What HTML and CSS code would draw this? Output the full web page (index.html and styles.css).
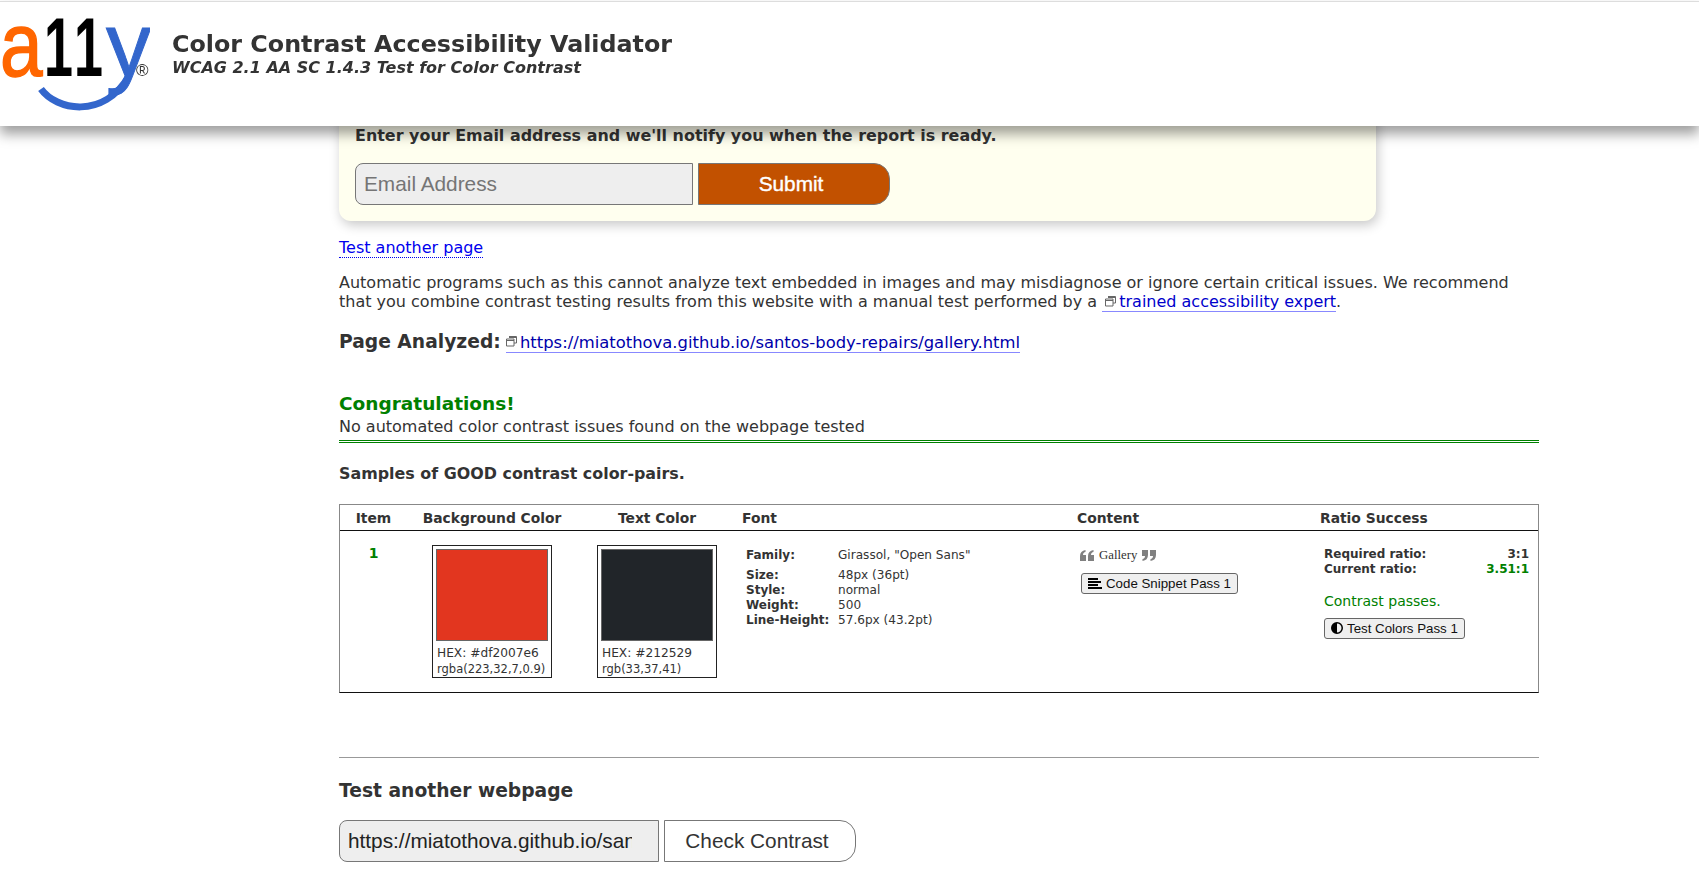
FILE: index.html
```html
<!DOCTYPE html>
<html lang="en">
<head>
<meta charset="utf-8">
<title>Color Contrast Accessibility Validator</title>
<link rel="stylesheet" href="styles.css">
</head>
<body>
<header class="site-header">
  <svg class="logo" width="150" height="120" viewBox="0 0 150 120" aria-label="a11y logo">
    <text class="logo-a" transform="translate(0 74) scale(.85 1)">a</text>
    <text class="logo-1" transform="translate(44 74) scale(.62 1)">1</text>
    <text class="logo-1" transform="translate(74 74) scale(.62 1)">1</text>
    <text class="logo-y" x="106" y="74">y</text>
    <path class="logo-swoosh" d="M41 87 C56 108 103 118 129 74" />
    <text class="logo-r" x="136" y="74">®</text>
  </svg>
  <div class="titles">
    <h1>Color Contrast Accessibility Validator</h1>
    <p class="subtitle">WCAG 2.1 AA SC 1.4.3 Test for Color Contrast</p>
  </div>
</header>

<main class="content">
  <section class="notify">
    <p class="notify-text">Enter your Email address and we'll notify you when the report is ready.</p>
    <form class="notify-form">
      <input class="email" type="text" placeholder="Email Address">
      <button class="submit" type="button">Submit</button>
    </form>
  </section>

  <p class="another"><a href="#">Test another page</a></p>

  <p class="disclaimer">Automatic programs such as this cannot analyze text embedded in images and may misdiagnose or ignore certain critical issues. We recommend that you combine contrast testing results from this website with a manual test performed by a <a href="#" class="ext"><svg class="ext-icon" width="11" height="11" viewBox="0 0 11 11"><path d="M3 .5h7.5v6.5H8M.5 3h7.5v7H.5zM.5 4.500h7.500M3 1.500h7.500"/></svg>trained accessibility expert</a>.</p>

  <p class="analyzed"><strong>Page Analyzed:</strong> <a href="#" class="ext url"><svg class="ext-icon" width="11" height="11" viewBox="0 0 11 11"><path d="M3 .5h7.5v6.5H8M.5 3h7.5v7H.5zM.5 4.500h7.500M3 1.500h7.500"/></svg>https://miatothova.github.io/santos-body-repairs/gallery.html</a></p>

  <h2 class="congrats">Congratulations!</h2>
  <p class="none-found">No automated color contrast issues found on the webpage tested</p>

  <h3 class="samples">Samples of GOOD contrast color-pairs.</h3>

  <table class="results">
    <thead>
      <tr>
        <th class="c-item">Item</th>
        <th class="c-bg">Background Color</th>
        <th class="c-text">Text Color</th>
        <th class="c-font left">Font</th>
        <th class="c-content left">Content</th>
        <th class="c-ratio left">Ratio Success</th>
      </tr>
    </thead>
    <tbody>
      <tr>
        <td class="item-num">1</td>
        <td>
          <div class="swatch">
            <div class="chip chip-red"></div>
            <div class="hex">HEX: #df2007e6</div>
            <div class="rgb">rgba(223,32,7,0.9)</div>
          </div>
        </td>
        <td>
          <div class="swatch">
            <div class="chip chip-dark"></div>
            <div class="hex">HEX: #212529</div>
            <div class="rgb">rgb(33,37,41)</div>
          </div>
        </td>
        <td>
          <dl class="font-info">
            <dt class="first">Family:</dt><dd class="first">Girassol, "Open Sans"</dd>
            <dt>Size:</dt><dd>48px (36pt)</dd>
            <dt>Style:</dt><dd>normal</dd>
            <dt>Weight:</dt><dd>500</dd>
            <dt>Line-Height:</dt><dd>57.6px (43.2pt)</dd>
          </dl>
        </td>
        <td>
          <div class="snippet">
            <svg class="quote" width="14" height="11" viewBox="0 0 14 11"><path d="M0 11V6C0 2.500 2 .5 5.500 0v2C4 2.300 3 3.300 3 5h3v6zM8 11V6c0-3.500 2-5.500 5.500-6v2C12 2.300 11 3.300 11 5h3v6z"/></svg>
            <span class="snippet-text">Gallery</span>
            <svg class="quote" width="14" height="11" viewBox="0 0 14 11"><path d="M6 0v5c0 3.500-2 5.500-5.500 6V9C2 8.700 3 7.700 3 6H0V0zM14 0v5c0 3.500-2 5.500-5.500 6V9C10 8.700 11 7.700 11 6H8V0z"/></svg>
          </div>
          <button class="mini" type="button"><svg width="14" height="11" viewBox="0 0 14 11"><path d="M0 0h10v2H0zM0 3h13v2H0zM0 6h10v2H0zM0 9h14v2H0z"/></svg>Code Snippet Pass 1</button>
        </td>
        <td class="ratio-cell">
          <div class="ratio-row"><b>Required ratio:</b><b>3:1</b></div>
          <div class="ratio-row"><b>Current ratio:</b><b class="good">3.51:1</b></div>
          <p class="passes">Contrast passes.</p>
          <button class="mini" type="button"><svg width="12" height="12" viewBox="0 0 12 12"><path d="M6 0a6 6 0 1 0 0 12A6 6 0 0 0 6 0zm0 1.500a4.500 4.500 0 0 1 0 9z" fill-rule="evenodd"/></svg>Test Colors Pass 1</button>
        </td>
      </tr>
    </tbody>
  </table>

  <hr class="rule">

  <h2 class="test-again">Test another webpage</h2>
  <form class="test-form">
    <input class="url-input" type="text" value="https://miatothova.github.io/santos-body-repairs/gallery.html">
    <button class="check" type="button">Check Contrast</button>
  </form>
</main>
</body>
</html>
```

FILE: styles.css
```css
html, body { margin: 0; padding: 0; }
body {
  background: #fff;
  color: #333;
  font-family: "DejaVu Sans", Verdana, sans-serif;
  font-size: 16px;
  line-height: 19.5px;
  height: 881px;
  overflow: hidden;
}

/* Fixed header: overlaps the scrolled content */
.site-header {
  position: fixed;
  top: 0;
  left: 0;
  right: 0;
  height: 124px;
  background: #fff;
  border-top: 1px solid #ddd;
  margin-top: 1px;
  box-shadow: 0 8px 12px rgba(0, 0, 0, .38);
  display: flex;
  align-items: flex-start;
  z-index: 10;
}
.logo { flex: none; margin-right: 22px; }
.logo text { font-family: "Liberation Sans", Arial, sans-serif; }
.logo-a { font-size: 90px; fill: #f60; stroke: #f60; stroke-width: 1.500; }
.logo-1 { font-size: 84px; fill: #000; font-weight: 700; }
.logo-y { font-size: 90px; fill: #36c; stroke: #36c; stroke-width: 1; }
.logo-r { font-size: 17px; fill: #333; }
.logo-swoosh { fill: none; stroke: #36c; stroke-width: 7; }
.titles { padding-top: 28px; }
h1 { margin: 0; font-size: 23.800px; line-height: 28px; font-weight: 700; color: #333; }
.subtitle { margin: 0; font-size: 16px; line-height: 19px; font-weight: 700; font-style: italic; }

.content { width: 1200px; margin-left: 339px; }

.notify {
  width: 1037px;
  height: 151px;
  margin-top: 70px;
  padding: 0 16px;
  box-sizing: border-box;
  background: #ffffef;
  border-radius: 0 0 12px 12px;
  box-shadow: 2px 4px 12px rgba(0, 0, 0, .22);
}
.notify-text { margin: 0; padding-top: 56px; font-size: 15.950px; font-weight: 700; line-height: 20px; }
.notify-form { display: flex; gap: 5px; margin-top: 17px; }
.email, .url-input {
  box-sizing: border-box;
  height: 42px;
  border: 1px solid #777;
  border-radius: 8px 0 0 8px;
  background: #eee;
  padding: 0 8px;
  font-family: "Liberation Sans", Arial, sans-serif;
  font-size: 20.800px;
  color: #222;
}
.email { width: 338px; }
.email::placeholder { color: #757575; opacity: 1; }
.submit, .check {
  box-sizing: border-box;
  height: 42px;
  border: 1px solid #777;
  border-radius: 0 16px 16px 0;
  font-family: "Liberation Sans", Arial, sans-serif;
  font-size: 20.800px;
  padding: 0 6px 0 0;
}
.submit {
  width: 192px;
  background: #c25100;
  color: #fff;
  -webkit-text-stroke: .4px #fff;
}

a { color: #00e; text-decoration: none; border-bottom: 1px dotted #00e; }
.another { margin: 17px 0 0; }
.disclaimer { margin: 15px 0 0; }
.ext { border-bottom: 1px solid #88f; color: #00c; }
.ext-icon { margin: 0 3px 3px 0; vertical-align: middle; fill: none; stroke: #666; stroke-width: 1; }
.disclaimer .ext-icon { margin-left: 3px; }
.analyzed { margin: 20px 0 0; font-size: 16.400px; }
.analyzed strong { font-size: 18.700px; }
.url { color: #00a; }

.congrats { margin: 40px 0 0; font-size: 18.500px; line-height: 24px; color: #008000; font-weight: 700; }
.none-found { margin: 1px 0 0; padding-bottom: 3px; border-bottom: 3px double #008000; }
.samples { margin: 21px 0 0; font-size: 15.900px; line-height: 20px; font-weight: 700; }

.results {
  width: 1200px;
  margin-top: 20px;
  table-layout: fixed;
  border-collapse: separate;
  border-spacing: 0;
  border: 1px solid #888;
  border-bottom-color: #111;
  font-size: 13px;
}
.results th {
  height: 25px;
  padding: 1px 0 0;
  box-sizing: border-box;
  font-size: 13.850px;
  font-weight: 700;
  line-height: 24px;
  text-align: center;
  border-bottom: 1px solid #111;
}
.results th.left { text-align: left; padding-left: 5px; }
.results td { vertical-align: top; padding: 14px 0 14px; line-height: 15px; }
.c-item { width: 67px; }
.c-bg { width: 170px; }
.c-text { width: 160px; }
.c-font { width: 335px; }
.c-content { width: 243px; }
.results td.item-num { padding-top: 15px; text-align: center; font-weight: 700; color: #008000; font-size: 14px; }

.swatch {
  box-sizing: border-box;
  width: 120px;
  height: 133px;
  margin: 0 auto;
  padding: 3px;
  border: 1px solid #222;
  font-size: 12.200px;
  line-height: 15px;
}
.chip { height: 92px; box-sizing: border-box; border: 1px solid #666; }
.chip-red { background: #df2007e6; }
.chip-dark { background: #212529; }
.hex { margin: 5px 0 0 1px; }
.rgb { margin-left: 1px; white-space: nowrap; font-size: 11.500px; padding-top: 1px; line-height: 14px; }

.font-info {
  display: grid;
  grid-template-columns: 92px 1fr;
  margin: 3px 0 0 9px;
  font-size: 12px;
}
.font-info dt { font-weight: 700; }
.font-info dd { margin: 0; font-size: 12.100px; }
.font-info .first { margin-bottom: 5px; }

.snippet { display: flex; align-items: center; gap: 5px; height: 15px; margin: 3px 0 0 8px; }
.snippet-text { font-family: "Liberation Serif", serif; font-size: 12.800px; color: #333; }
.quote { fill: #808080; }

.mini {
  display: inline-flex;
  align-items: center;
  gap: 4px;
  height: 21px;
  padding: 0 6px;
  margin-left: 9px;
  margin-top: 10px;
  background: #efefef;
  border: 1px solid #666;
  border-radius: 3px;
  color: #111;
  font-family: "Liberation Sans", Arial, sans-serif;
  font-size: 13.300px;
  white-space: nowrap;
}

.results td.ratio-cell { padding: 16px 9px 14px; }
.ratio-cell .mini { margin-left: 0; margin-top: 0; }
.ratio-row { display: flex; justify-content: space-between; font-size: 12px; }
.good { color: #008000; }
.passes { margin: 15px 0 8px; color: #008000; font-size: 14px; line-height: 18px; }

.rule { margin: 64px 0 0; border: 0; border-top: 1px solid #999; }
.test-again { margin: 21px 0 0; font-size: 18.700px; line-height: 24px; font-weight: 700; }
.test-form { display: flex; gap: 5px; margin-top: 17px; }
.url-input { width: 320px; padding-right: 26px; }
.check { width: 192px; background: #fff; color: #333; }
```
